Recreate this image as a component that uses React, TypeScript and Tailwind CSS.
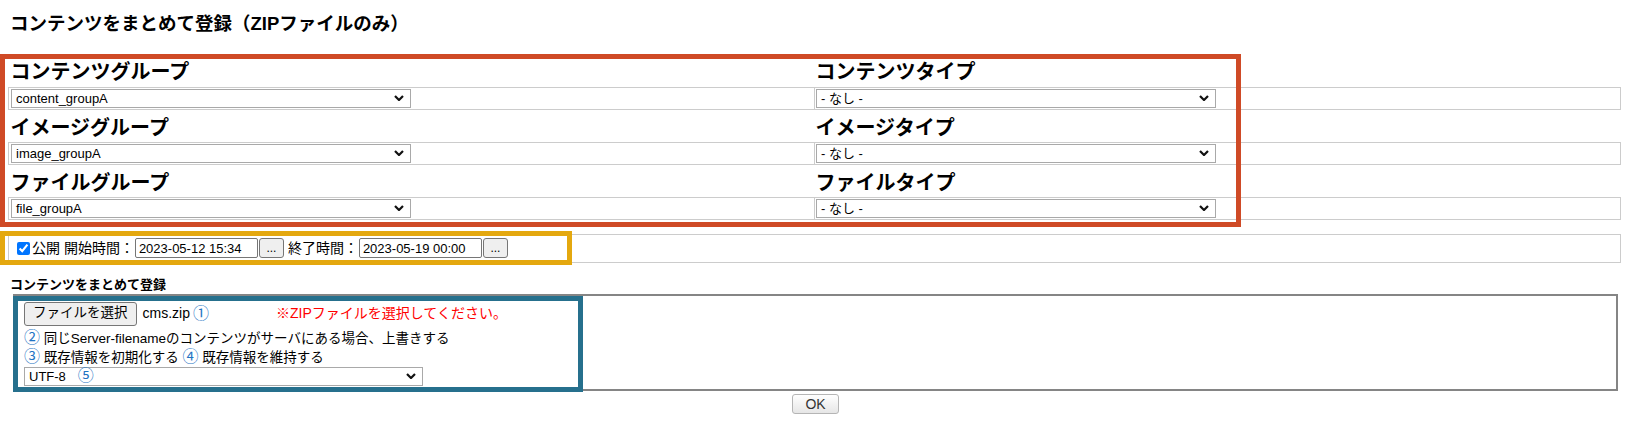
import React from 'react';

const FONT = "font-['Liberation_Sans','Noto_Sans_CJK_JP',sans-serif]";

const Chevron = () => (
  <svg width="10" height="6" viewBox="0 0 10 6" className="shrink-0">
    <path d="M1 1 L5 5 L9 1" fill="none" stroke="#111" strokeWidth="2.2" />
  </svg>
);

interface FakeSelectProps {
  value: string;
  width: string;
  badge?: string;
}

const FakeSelect: React.FC<FakeSelectProps> = ({ value, width, badge }) => (
  <div
    className={`flex items-center justify-between h-[19px] border border-[#a9a9a9] bg-white pl-[4px] pr-[6px] text-[13px] leading-none ${width}`}
  >
    <span className="flex items-center">
      <span>{value}</span>
      {badge && <span className="ml-[12px] text-[16px] text-[#1f74c3]">{badge}</span>}
    </span>
    <Chevron />
  </div>
);

const groups = [
  { left: 'コンテンツグループ', leftValue: 'content_groupA', right: 'コンテンツタイプ' },
  { left: 'イメージグループ', leftValue: 'image_groupA', right: 'イメージタイプ' },
  { left: 'ファイルグループ', leftValue: 'file_groupA', right: 'ファイルタイプ' },
];

const SmallButton = () => (
  <button className="h-[20px] w-[25px] ml-[1px] border border-[#767676] rounded-[3px] bg-[#efefef] text-[12px] leading-none">
    ...
  </button>
);

export default function App() {
  return (
    <div className={`relative w-[1631px] h-[421px] bg-white text-black ${FONT}`}>
      {/* title */}
      <h1 className="h-[54px] pl-[10px] pt-[10px] text-[18.5px] font-bold leading-[27px]">
        コンテンツをまとめて登録（ZIPファイルのみ）
      </h1>

      {/* group / type selects */}
      <table className="ml-[8px] w-[1613px] table-fixed border-collapse">
        <tbody>
          {groups.map((g) => (
            <React.Fragment key={g.left}>
              <tr className="h-[33px]">
                <td className="w-1/2 px-[2px] pt-[4px] align-middle text-[20px] font-bold leading-[28px]">{g.left}</td>
                <td className="w-1/2 px-[1px] pt-[4px] align-middle text-[20px] font-bold leading-[28px]">{g.right}</td>
              </tr>
              <tr className="h-[22px]">
                <td className="border border-[#cccccc] px-[2px] align-middle">
                  <FakeSelect value={g.leftValue} width="w-[400px]" />
                </td>
                <td className="border border-[#cccccc] px-[1px] align-middle">
                  <FakeSelect value="- なし -" width="w-[400px]" />
                </td>
              </tr>
            </React.Fragment>
          ))}
        </tbody>
      </table>

      {/* publish period */}
      <div className="mt-[14px] ml-[8px] w-[1613px] h-[29px] border border-[#cccccc] flex items-center pl-[8px] text-[14px]">
        <input type="checkbox" defaultChecked className="w-[13px] h-[13px] accent-[#0075ff]" />
        <span className="ml-[2px]">公開 開始時間：</span>
        <input
          readOnly
          value="2023-05-12 15:34"
          className="ml-[1px] w-[123px] h-[20px] border border-[#767676] rounded-[2px] px-[3px] text-[13px]"
        />
        <SmallButton />
        <span className="ml-[4px]">終了時間：</span>
        <input
          readOnly
          value="2023-05-19 00:00"
          className="ml-[1px] w-[123px] h-[20px] border border-[#767676] rounded-[2px] px-[3px] text-[13px]"
        />
        <SmallButton />
      </div>

      {/* bulk upload */}
      <div className="mt-[14px] pl-[10px] text-[13px] font-bold leading-[16px]">コンテンツをまとめて登録</div>
      <div className="mt-[1px] ml-[13px] w-[1605px] h-[97px] border-2 border-[#858585] pl-[9px] pt-[6px] text-[13.5px]">
        <div className="flex items-center h-[24px]">
          <div className="flex items-center w-[252px]">
            <button className="h-[24px] px-[8px] border border-[#767676] rounded-[3px] bg-[#efefef] text-[13.5px]">
              ファイルを選択
            </button>
            <span className="ml-[6px] text-[14px]">cms.zip</span>
            <span className="ml-[3px] text-[16px] text-[#1f74c3]">①</span>
          </div>
          <span className="text-[14px] text-[#ff0000]">※ZIPファイルを選択してください。</span>
        </div>
        <div className="mt-[3px] leading-[18px]">
          <span className="text-[16px] text-[#1f74c3]">②</span> 同じServer-filenameのコンテンツがサーバにある場合、上書きする
        </div>
        <div className="leading-[18px]">
          <span className="text-[16px] text-[#1f74c3]">③</span> 既存情報を初期化する{' '}
          <span className="text-[16px] text-[#1f74c3]">④</span> 既存情報を維持する
        </div>
        <FakeSelect value="UTF-8" badge="⑤" width="w-[399px]" />
      </div>

      <div className="flex justify-center mt-[3px]">
        <button className="w-[47px] h-[20px] border border-[#b5b5b5] rounded-[3px] bg-gradient-to-b from-white to-[#e6e6e6] text-[14px] text-[#333] leading-none">
          OK
        </button>
      </div>

      {/* annotation frames */}
      <div className="absolute left-0 top-[54px] w-[1241px] h-[173px] border-[5px] border-[#cf4a26] pointer-events-none" />
      <div className="absolute left-0 top-[231px] w-[572px] h-[34px] border-[5px] border-[#e4a80f] pointer-events-none" />
      <div className="absolute left-[13px] top-[296px] w-[570px] h-[96px] border-[5px] border-[#26708d] pointer-events-none" />
    </div>
  );
}
